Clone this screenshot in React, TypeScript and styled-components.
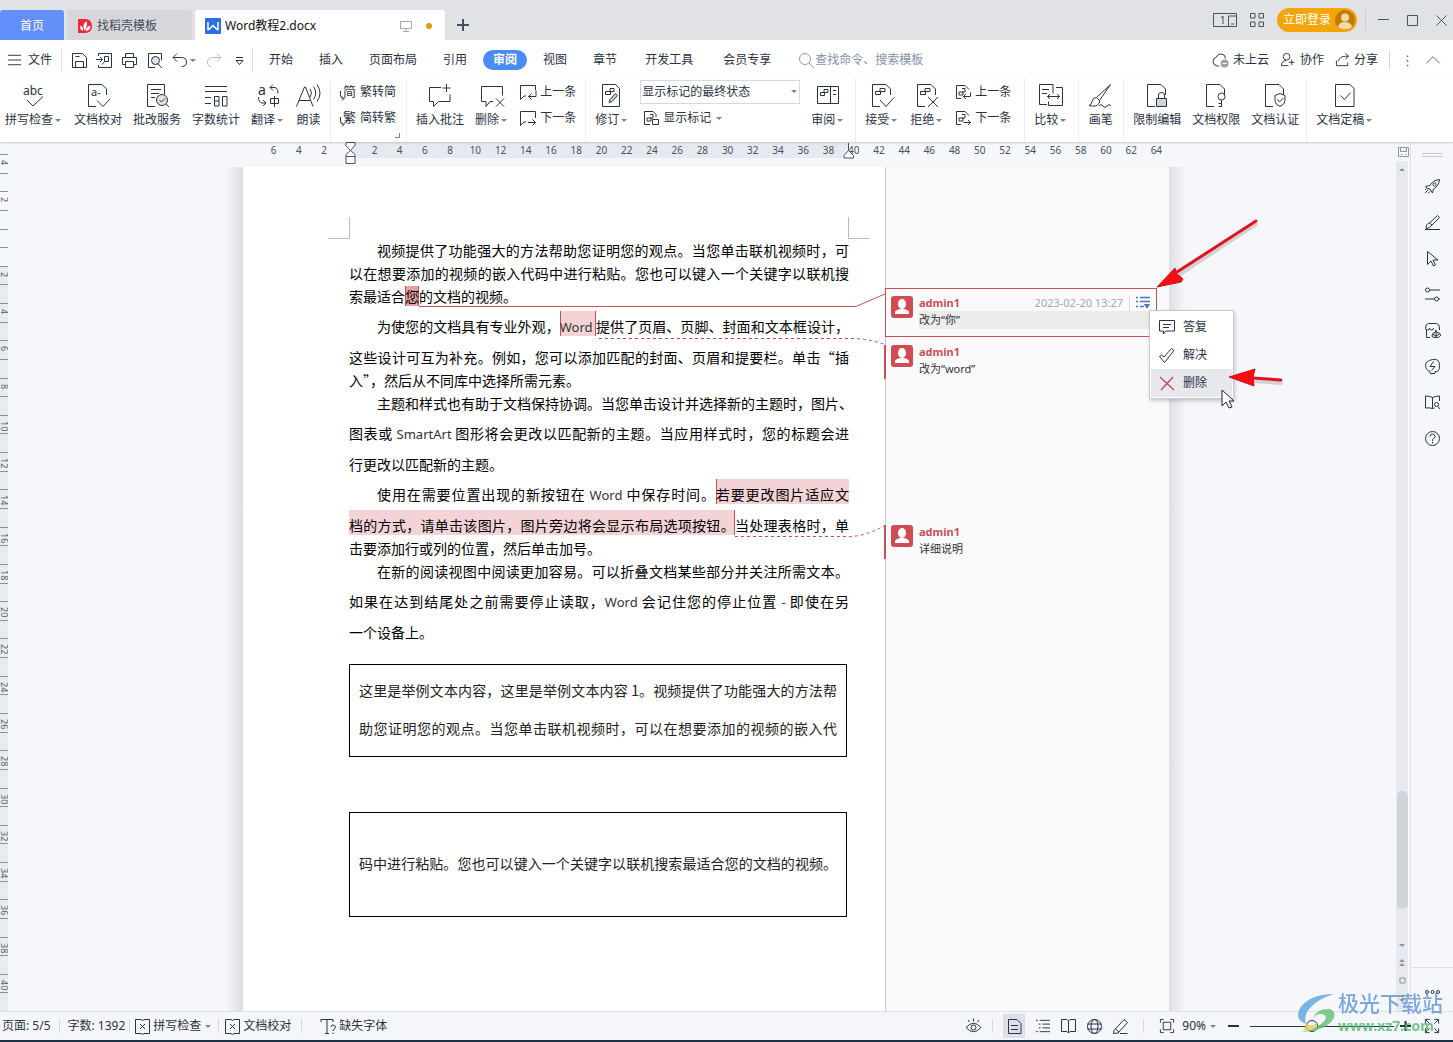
import React from "react";
import styled, { createGlobalStyle, css } from "styled-components";

const uiFont = '"Noto Sans", "Noto Sans CJK SC", sans-serif';
const docFont = '"Noto Sans CJK SC", "Noto Sans", sans-serif';
const ink = "#2b3244";
const red = "#c94f57";

const Global = createGlobalStyle`
  *, *::before, *::after { box-sizing: border-box; }
  html, body, #root { height: 100%; }
  body { margin: 0; overflow: hidden; font: 12px/18px ${uiFont}; color: ${ink}; }
  button, input, select { font: inherit; color: inherit; margin: 0; }
  button { padding: 0; border: 0; background: none; white-space: nowrap; cursor: default; }
  svg { display: block; flex: none; }
`;

/* ---------- icons ---------- */

const Svg = styled.svg`
  fill: none;
  stroke: currentColor;
  stroke-width: 1;
  overflow: visible;
  text {
    fill: currentColor;
    stroke: none;
    font-family: ${uiFont};
  }
`;

const docShape = "M10 22.5H2.5V.5H16l4.5 4.5v6";

const icons: Record<string, React.ReactNode> = {
  spell: (
    <>
      <text x="1" y="11" fontSize="12">abc</text>
      <path d="M5 16l6 6L21 12.500" />
    </>
  ),
  proof: (
    <>
      <path d={docShape} />
      <text x="5" y="12" fontSize="11">a-</text>
      <path d="M11 16.500l6 6 7-7.500" />
    </>
  ),
  grade: (
    <>
      <path d="M10 22.500H2.500V.5h17v10 M6 5.500h10 M6 9.500h8 M6 13.500h4" />
      <circle cx="17" cy="16" r="5.500" fill="#e0e2e6" />
      <path d="M14.500 16l2 2 3.500-3.500 M21 20l3 3" />
    </>
  ),
  count: (
    <path d="M1 2.500h22 M1 7.500h22 M1 13.500h6 M1 19.500h6 M10.500 12.500h4.500v9.500h-4.500z M10.500 17h4.500 M18.500 12.500h4.500v9.500h-4.500z" />
  ),
  translate: (
    <>
      <text x="2" y="11" fontSize="14">a</text>
      <path d="M14 3.500h5q3 .5 3 6 M17 .5l-3 3 3 3 M2.500 13q0 6 4 6h3 M7 16l3 3-3 3 M14.500 14.500h8v5h-8z M18.500 12v11" />
    </>
  ),
  read: (
    <path d="M.5 22.500L8.500 3h1l7.500 19.500 M3 16.500h11.500 M14 5q3 4 0 8 M17.500 2.500q4.500 6.500 0 13 M21 .5q6 8.500 0 17" />
  ),
  addNote: <path d="M13 3.500H1.500v14h4v5l5-5h11.500v-7 M18.500 0v8 M14.500 4h8" />,
  delNote: <path d="M13 17.500h-3l-4 5v-5H1.500V2.500h21v9 M16 14.500l8 8 M24 14.500l-8 8" />,
  revise: (
    <>
      <path d="M2.500.5h13l4 4v18h-17z M10 4.500h4v3h-4z M5.500 7.500h5v3h-5z" />
      <path d="M9 18.500l1-3 5.500-6 2 2-5.500 6z" fill="#ccd0d6" />
    </>
  ),
  panel: <path d="M1.500 2.500h21v17h-21z M14.500 2.500v17 M8 5.500h4v3H8z M4.500 8.500h4v3h-4z M17 6.500h3 M17 10.500h3" />,
  accept: (
    <>
      <path d={docShape} />
      <path d="M10 4.500h5v3h-5z M5.500 7.500h5v3h-5z M10 16l6 6.500 8-9" />
    </>
  ),
  reject: (
    <>
      <path d={docShape} />
      <path d="M10 4.500h5v3h-5z M5.500 7.500h5v3h-5z M13 13l10 10 M23 13l-10 10" />
    </>
  ),
  compare: (
    <path d="M8 20.500H.5V.5h13.500v9 M3 5.500h7 M3 9.500h5 M17 3.500h6.500v18H9.500v-4 M8.500 12.500h12 M11 10l-2.500 2.500L11 15 M18 10l2.500 2.500L18 15" />
  ),
  brush: (
    <path d="M22.500.5L8.500 13.500l3 3L22.500.5z M8.500 13.500q-4 0-4.500 4-.5 3-3 4 7 2 10-2 1-1.500.5-3 M11 22q2-3 4 0t4 0 4 0" />
  ),
  lock: (
    <>
      <path d={docShape} />
      <path d="M13.500 14v-3q0-2.500 3-2.500t3 2.500v3" />
      <path d="M11.500 14.500h10v8h-10z" fill="#cfd2d8" />
    </>
  ),
  key: (
    <>
      <path d={docShape} />
      <circle cx="17.500" cy="12.500" r="3.500" fill="#fff" />
      <path d="M17.500 16v7 M17.500 19.500h-3 M17.500 22.500h-3" />
    </>
  ),
  shield: (
    <>
      <path d={docShape} />
      <path d="M17 9.500l5 2v5q0 4-5 6-5-2-5-6v-5z" fill="#fff" />
      <path d="M14.500 15.500l2 2.500 4-4" />
    </>
  ),
  final: <path d="M2.500.5H17l4 4v18H2.500z M7.500 11.500l4 4 6-7" />,
};

const smallIcons: Record<string, React.ReactNode> = {
  simp: (
    <>
      <text x="3" y="12" fontSize="13">简</text>
      <path d="M.5 7v4q0 3.500 3 3.500 M2 12.500l2 2-2 2" />
    </>
  ),
  trad: (
    <>
      <text x="3" y="12" fontSize="13">繁</text>
      <path d="M.5 7v4q0 3.500 3 3.500 M2 12.500l2 2-2 2" />
    </>
  ),
  prevNote: <path d="M15.500 6V1.500H.5v14l3.500-3.500h2 M16 6.500v6H8.500 M11.500 9.500l-3 3 3 3" />,
  nextNote: <path d="M15.500 8V1.500H.5v14l3.500-3.500h2 M8 12.500h7.500 M12.500 9.500l3 3-3 3" />,
  marks: <path d="M7 14.500H1.500v-13H10l3 3V7 M4 8h4v3H4z M7 4.500h3V8H7 M9.500 9.500h6v5h-6z" />,
  prevRev: <path d="M6 14.500H1.500v-13H10l4 4 M4 8h4v3H4z M7 4.500h3V8H7 M15 12.500H8.500 M15.500 8.500v4 M11 10l-2.500 2.500L11 15" />,
  nextRev: <path d="M6 14.500H1.500v-13H10l4 4 M4 8h4v3H4z M7 4.500h3V8H7 M8.500 12.500h7 M13 10l2.500 2.500L13 15" />,
  save: <path d="M1.500 1.500h10l4 4v10h-14z M4.500 15.500V9.500h8v6 M4.500 4.500h4" />,
  exportPdf: <path d="M2.500 4V1.500h13v14h-13V13 M0 7.500h6 M4 5l2.500 2.500L4 10 M8.500 4.500h4v5h-4z M8.500 9.500l-2.500 3" />,
  print: <path d="M4.500 5V1.500h8V5 M4 12.500H1.500V5.500h14v7H13 M4.500 9.500h8v6h-8z" />,
  preview: (
    <>
      <path d="M9 15.500H2.500v-14h13v7" />
      <circle cx="9.500" cy="8.500" r="4" fill="#dfe2e7" />
      <path d="M12 12l4 4" />
    </>
  ),
  undo: <path d="M6 1.500l-4 4 4 4 M2.500 5.500h8q5 0 5 4.500t-5 4.500" />,
  redo: <path d="M11 1.500l4 4-4 4 M14.500 5.500h-8q-5 0-5 4.500t4 4.500" />,
  more: <path d="M5 5.500h7 M5 8.500h7l-3.500 4z" />,
  burger: <path d="M1 3.500h14 M1 8.500h14 M1 13.500h14" />,
  search: (
    <>
      <circle cx="7" cy="7" r="5.500" />
      <path d="M11 11l5 5" />
    </>
  ),
  cloud: (
    <>
      <path d="M7 14H5Q1 13 1 9.500T4.500 5Q5.500 1.500 9.500 2T13.500 6.500" />
      <circle cx="12.500" cy="11.500" r="4" fill="#9aa0ad" stroke="none" />
      <path d="M10.500 11.500h4" stroke="#fff" />
    </>
  ),
  collab: (
    <>
      <circle cx="7" cy="5" r="3.500" />
      <path d="M9 14.500H1.500q0-5 5-5.500 M12.500 8v6 M9.500 11h6" />
    </>
  ),
  share: <path d="M1.500 9v5.500h12V11 M3.500 10q1-5.500 8-5.500h2.500 M11 1.500l3.500 3-3.500 3" />,
  dots: <path d="M8.500 2v2 M8.500 8v2 M8.500 14v2" strokeWidth="2" />,
  chevronUp: <path d="M1.500 12l7-7 7 7" />,
  rocket: (
    <>
      <path d="M6 7.500Q9 2 15.500 1.500 15 8 9.500 11l-1 4-2.500-4-3-.5L1.500 8.500z" />
      <circle cx="10.500" cy="6.500" r="1.500" />
      <path d="M4 12l-3 3 M6 13.500L4 15.500 M2.500 10.500l-1.500 1.500" />
    </>
  ),
  pen: <path d="M13.500 1.500l2 2L8 11 5.500 9z M5.500 9q-3 0-3.500 5.500 4 0 6-3.500 M1 15.500h15" />,
  pointer: <path d="M3.500 1.500v13l3.500-3.500 2.500 5 2-1-2.500-5h5z" />,
  sliders: (
    <>
      <circle cx="3.500" cy="4" r="2" />
      <circle cx="12.500" cy="13" r="2" />
      <path d="M5.500 4H16 M1 13h9.500 M14.500 13H16" />
    </>
  ),
  shop: <path d="M6 15.500H2.500V8 M1.500 6q0-4 3-4.500h8q3 .5 3 4.500 M1.500 6q0 2 2 2t2-2q0 2 2 2t2-2 M15.500 6v2 M8 14q0-3.500 3-3.500l1-2.500 1 2.500q3.500 0 3.500 2.500t-4.500 2.500-4-1.500z M12 10v5.500 M9 12.500l3 1.500 3.500-2" />,
  bulb: <path d="M6 15.500h5 M6 15v-1.500Q1.500 12 1.500 7.500T8.500 1.500t7 6-4.500 6V15 M9.500 3.500L6 8.500h5L7.500 12.500" />,
  book: <path d="M8.500 3.500v11 M8.500 3.500q-3-1.500-7-1.500v12q4-.5 7 .5 M8.500 3.500q3-1.500 7-1.500v5 M8.500 14.500l2-.5 M10.500 10.500a2 2 0 1 0 4 0a2 2 0 1 0-4 0 M14 12.500l2 2.500" />,
  help: (
    <>
      <circle cx="8.500" cy="8.500" r="7" />
      <path d="M6 6.500q0-2.500 2.500-2.500T11 6.500q0 1.500-2.500 3V11 M8.500 12v1.500" />
    </>
  ),
  reply: <path d="M1.500 1.500h15v10.500H8l-2.500 3v-3h-4z M5 5.500h8 M5 8.500h6" />,
  resolve: <path d="M1.500 9.500l2-1.500 2.500 2L13.500 1.500l2.500 2-9.500 12z" />,
  remove: <path d="M2 2l14 13 M15 2L3 15" stroke="#c94f57" strokeWidth="1.500" />,
  spellBook: <path d="M8.500 2.500l-1.500-1H1.500v14h5.500l1.500 1 1.500-1h5.500v-14H10z M6 6l5 5 M11 6l-5 5" />,
  missing: <path d="M1 4V1.500h12V4 M7 1.500v14 M5 15.500h4 M11 9q0-2 2-2t2.500 2q0 1.500-2.500 3v1 M13 14.500V16" />,
  eye: (
    <>
      <path d="M1 9.500Q8.500 1 16 9.500 8.500 18 1 9.500z M8.500.5v3 M3 2l1.500 2 M14 2l-1.500 2" />
      <circle cx="8.500" cy="9.500" r="2.500" />
    </>
  ),
  pageView: <path d="M2.500 1.500h8.500l4 4v10H2.500z M5 7.500h7 M5 11.500h7" />,
  outline: <path d="M1 2.500h2 M5 2.500h11 M4 6.500h2 M8 6.500h8 M4 10.500h2 M8 10.500h8 M1 14.500h2 M5 14.500h11" />,
  openBook: <path d="M8.500 3L7 1.500H1.500v12H7L8.500 15l1.500-1.500h5.500v-12H10z M8.500 3v12" />,
  globe: (
    <>
      <circle cx="8.500" cy="8.500" r="7" />
      <ellipse cx="8.500" cy="8.500" rx="3.500" ry="7" />
      <path d="M1.500 6h14 M1.500 11h14" />
    </>
  ),
  marker: <path d="M2 12.500L12 1.500l3.500 3L6 15l-4.500.5z M3.500 11l3.500 3 M8 15.500h7.500" />,
  fit: <path d="M4.500 4.500h8v8h-8z M1.500 5V1.500H5 M12 1.500h3.500V5 M15.500 12v3.500H12 M5 15.500H1.500V12" />,
  full: <path d="M1.500 6V1.500H6 M1.500 1.500L6 6 M11 1.500h4.500V6 M15.500 1.500L11 6 M15.500 11v4.500H11 M15.500 15.500L11 11 M6 15.500H1.500V11 M1.500 15.500L6 11" />,
  dots3: (
    <>
      <circle cx="3" cy="8" r="1.500" />
      <circle cx="8.500" cy="8" r="1.500" />
      <circle cx="14" cy="8" r="1.500" />
    </>
  ),
};

const BigIcon = ({ name }: { name: string }) => (
  <Svg width={25} height={24} viewBox="0 0 25 24" aria-hidden>{icons[name]}</Svg>
);
const SmallIcon = ({ name, size = 17 }: { name: string; size?: number }) => (
  <Svg width={size} height={size} viewBox="0 0 17 17" aria-hidden>{smallIcons[name]}</Svg>
);

const Caret = styled.span`
  width: 8px;
  margin-left: 2px;
  display: inline-flex;
  &::after {
    content: "";
    border: 3px solid transparent;
    border-top-color: #7c8494;
    border-bottom: 0;
  }
`;

/* ---------- frame ---------- */

const Frame = styled.div`
  display: flex;
  flex-direction: column;
  height: 100vh;
  background: #f5f7fa;
  border-bottom: 2px solid #1d3246;
`;

const Divider = styled.span<{ $h?: number; $m?: number }>`
  flex: none;
  width: 1px;
  height: ${(p) => p.$h ?? 20}px;
  margin: 0 ${(p) => p.$m ?? 0}px;
  background: #d5d8de;
`;

/* ---------- title bar ---------- */

const TitleBar = styled.header`
  flex: none;
  display: flex;
  align-items: flex-end;
  height: 40px;
  padding-right: 6px;
  background: #e1e2e6;
`;

const DocTabs = styled.nav`
  display: flex;
  gap: 3px;
`;

const DocTab = styled.button<{ $kind: "home" | "idle" | "active" }>`
  display: flex;
  align-items: center;
  gap: 4px;
  height: 30px;
  padding: 2px 10px 0;
  border-radius: 3px 3px 0 0;
  ${(p) => p.$kind === "home" && css`width: 64px; justify-content: center; background: #628ffa; color: #fff;`}
  ${(p) => p.$kind === "idle" && css`width: 125px; background: #d6d7db; color: #454b59;`}
  ${(p) => p.$kind === "active" && css`width: 250px; background: #fff; color: #111;`}
`;

const TabStatus = styled.span`
  display: flex;
  align-items: center;
  gap: 14px;
  margin-left: auto;
  padding-right: 3px;
  color: #a3a8b3;
`;

const Unsaved = styled.span`
  width: 6px;
  height: 6px;
  border-radius: 50%;
  background: #e0980c;
`;

const NewTab = styled.button`
  display: grid;
  place-items: center;
  width: 36px;
  height: 30px;
  color: #454e63;
`;

const WindowTools = styled.div`
  display: flex;
  align-items: center;
  gap: 13px;
  height: 40px;
  margin-left: auto;
  color: #4a5160;
`;

const Login = styled.button`
  display: flex;
  align-items: center;
  justify-content: space-between;
  width: 80px;
  height: 24px;
  padding: 0 2px 0 6px;
  border-radius: 12px;
  background: #f5a507;
  color: #fff;
`;

const WindowButtons = styled.div`
  display: flex;
  align-items: center;
  gap: 18px;
  padding-left: 12px;
  margin-left: -5px;
  border-left: 1px solid #c9ccd3;
`;

/* ---------- menu row ---------- */

const MenuRow = styled.div`
  flex: none;
  display: flex;
  align-items: center;
  height: 38px;
  padding: 2px 12px 0 7px;
  background: #fff;
`;

const MenuButton = styled.button<{ $gap?: number; $color?: string }>`
  display: flex;
  align-items: center;
  gap: ${(p) => p.$gap ?? 4}px;
  color: ${(p) => p.$color ?? ink};
`;

const QuickBar = styled.div`
  display: flex;
  align-items: center;
  gap: 8px;
  padding: 0 4px 0 9px;
  margin-left: 9px;
  height: 24px;
  border-left: 1px solid #dcdfe4;
  border-right: 1px solid #dcdfe4;
`;

const Tabs = styled.nav`
  display: flex;
  align-items: center;
  padding-left: 3px;
`;

const RibbonTab = styled.button<{ $wide?: boolean; $on?: boolean }>`
  height: 20px;
  line-height: 20px;
  padding: 0 ${(p) => (p.$wide ? 15 : 13)}px;
  ${(p) => p.$on && css`
    margin: 0 3px;
    padding: 0 10px;
    border-radius: 10px;
    background: #4a8bf5;
    color: #fff;
    font-weight: 700;
  `}
`;

const Search = styled.label`
  display: flex;
  align-items: center;
  flex: 1;
  margin-left: 12px;
  color: #8a97ac;
`;

const SearchInput = styled.input`
  flex: 1;
  min-width: 0;
  border: 0;
  padding: 0;
  outline: 0;
  background: none;
  &::placeholder { color: #8490a5; opacity: 1; }
`;

const MenuTools = styled.div`
  display: flex;
  align-items: center;
  gap: 11px;
`;

/* ---------- ribbon ---------- */

const Ribbon = styled.div`
  flex: none;
  display: flex;
  height: 64px;
  background: #fff;
  box-shadow: 0 1px 2px rgba(60, 70, 90, 0.25);
  position: relative;
  z-index: 2;
`;

const Group = styled.div<{ $start?: number; $end?: number; $last?: boolean }>`
  position: relative;
  display: flex;
  gap: 11px;
  padding: 2px ${(p) => p.$end ?? 10}px 0 ${(p) => p.$start ?? 9}px;
  border-right: ${(p) => (p.$last ? 0 : 1)}px solid #eceef1;
`;

const Corner = styled.span`
  position: absolute;
  right: 6px;
  bottom: 4px;
  width: 5px;
  height: 5px;
  border: solid #7c8494;
  border-width: 0 1px 1px 0;
`;

const Tool = styled.button`
  display: flex;
  flex-direction: column;
  align-items: center;
  gap: 3px;
  height: 54px;
  padding-top: 4px;
`;

const Label = styled.span`
  display: flex;
  align-items: center;
`;

const Stack = styled.div`
  display: flex;
  flex-direction: column;
  gap: 2px;
`;

const RowTool = styled.button<{ $indent?: number }>`
  display: flex;
  align-items: center;
  gap: 3px;
  height: 24px;
  padding-left: ${(p) => p.$indent ?? 0}px;
`;

const SelectWrap = styled.label`
  position: relative;
  display: flex;
  width: 160px;
  height: 24px;
  ${Caret} {
    position: absolute;
    right: 1px;
    top: 10px;
  }
`;

const Select = styled.select`
  appearance: none;
  width: 100%;
  padding: 0 1px;
  border: 1px solid #d5d8de;
  border-radius: 0;
  background: #fff;
`;

/* ---------- workspace ---------- */

const Workspace = styled.div`
  flex: 1;
  min-height: 0;
  display: flex;
`;

const VRuler = styled.div`
  flex: none;
  display: flex;
  flex-direction: column;
  width: 8px;
  padding-top: 12px;
  overflow: hidden;
`;

const VCell = styled.span<{ $margin: boolean }>`
  flex: 1;
  min-height: 0;
  border-top: 1px solid #8b919c;
  background: linear-gradient(#8b919c, #8b919c) 0 50% / 100% 1px no-repeat ${(p) => (p.$margin ? "#f5f7fa" : "#e8ebf0")};
  font-size: 9px;
  line-height: 8px;
  color: #5a6070;
  writing-mode: vertical-rl;
  padding-top: 5px;
`;

const Editor = styled.main`
  flex: 1;
  min-width: 0;
  display: flex;
  flex-direction: column;
`;

const RulerBar = styled.div`
  flex: none;
  display: flex;
  justify-content: center;
  height: 25px;
  padding-left: 8px;
`;

const HRuler = styled.div`
  position: relative;
  display: grid;
  grid-template-columns: repeat(36, 1fr);
  width: 926px;
  padding-left: 18px;
  background: linear-gradient(#e6eaf0, #e6eaf0) 107px 0 / 499px 16px no-repeat;
  font-size: 10px;
  line-height: 16px;
  text-align: center;
  color: #4a5160;
`;

const RulerMark = styled(Svg)<{ $x: number; $y: number }>`
  position: absolute;
  left: ${(p) => p.$x}px;
  top: ${(p) => p.$y}px;
`;

const Canvas = styled.div`
  flex: 1;
  min-height: 0;
  display: flex;
  justify-content: center;
  padding-left: 8px;
  overflow: hidden;
`;

const PageEdge = styled.span<{ $side: "left" | "right" }>`
  flex: none;
  width: 17px;
  background: linear-gradient(to ${(p) => p.$side}, #dcdee1, #f5f7fa);
`;

const Page = styled.div`
  position: relative;
  flex: none;
  display: flex;
  width: 926px;
  background: #fff;
`;

const Sheet = styled.article`
  flex: 1;
  min-width: 0;
  padding: 50px 36px 0 106px;
  font-family: ${docFont};
  font-size: 14px;
  color: #000;
`;

const MarginMarks = styled.div`
  display: flex;
  justify-content: space-between;
  height: 22px;
  margin: 0 -21px;
  &::before, &::after {
    content: "";
    width: 22px;
    border: solid #b9bcc2;
    border-width: 0 1px 1px 0;
  }
  &::after { border-width: 0 0 1px 1px; }
`;

const Paragraph = styled.p`
  margin: 0;
`;

const Line = styled.span<{ $tall?: boolean; $first?: boolean; $full?: boolean }>`
  display: block;
  line-height: 23px;
  padding-top: ${(p) => (p.$tall ? 7 : 0)}px;
  padding-left: ${(p) => (p.$first ? "2em" : 0)};
  text-align: left;
  text-align-last: ${(p) => (p.$full ? "justify" : "left")};
  white-space: nowrap;
`;

const Latin = styled.span`
  font-family: ${uiFont};
  font-size: 13px;
  color: #333;
`;

const Mark = styled.mark<{ $on?: boolean; $open?: boolean; $close?: boolean }>`
  color: inherit;
  padding-top: ${(p) => (p.$on ? 0 : 5)}px;
  background: ${(p) => (p.$on ? "#e3a0a4" : "#f3d3d5")};
  box-shadow: ${(p) => `${p.$open ? `inset 1px 0 ${red}` : "inset 0 0 transparent"}, ${p.$close ? `inset -1px 0 ${red}` : "inset 0 0 transparent"}`};
`;

const TextFrame = styled.section<{ $gap: number; $top: number; $bottom: number }>`
  margin: ${(p) => p.$gap}px 2px 0 0;
  padding: ${(p) => p.$top}px 9px ${(p) => p.$bottom}px;
  border: 1px solid #000;
  color: #222;
`;

const BoxLine = styled.span`
  display: block;
  line-height: 38px;
  text-align-last: justify;
  white-space: nowrap;
`;

const Comments = styled.aside`
  flex: none;
  width: 284px;
  padding-top: 121px;
  border-left: 1px solid #c9cbd0;
  background: #fafafb;
`;

const Comment = styled.section<{ $on?: boolean; $gap?: number }>`
  position: relative;
  display: flex;
  gap: 6px;
  width: 272px;
  height: 49px;
  margin: ${(p) => p.$gap ?? 0}px 0 0 -1px;
  padding: 7px 6px 0 5px;
  border: 1px solid ${(p) => (p.$on ? red : "transparent")};
  ${(p) => !p.$on && css`
    &::before {
      content: "";
      position: absolute;
      left: -2px;
      top: 7px;
      width: 2px;
      height: 34px;
      background: ${red};
    }
  `}
`;

const Avatar = styled.span`
  flex: none;
  width: 22px;
  height: 22px;
  border-radius: 3px;
  background: #d04c54;
`;

const CommentBody = styled.div`
  flex: 1;
  min-width: 0;
`;

const CommentHead = styled.div`
  display: flex;
  align-items: center;
  height: 13px;
  margin-bottom: 2px;
  color: #a5a8ae;
  font-size: 11px;
`;

const Author = styled.strong`
  margin-right: auto;
  color: ${red};
  font-size: 11px;
`;

const CommentText = styled.input<{ $on?: boolean }>`
  display: block;
  width: 100%;
  height: 18px;
  padding: 0;
  border: 0;
  outline: 0;
  background: ${(p) => (p.$on ? "#ececec" : "none")};
  font-size: 11px;
  color: #333;
`;

const Menu = styled.div`
  position: absolute;
  z-index: 3;
  left: 263px;
  top: 21px;
  width: 85px;
  padding: 2px 1px 1px;
  border: 1px solid #c6c9cf;
  background: #fff;
  box-shadow: 1px 2px 4px rgba(0, 0, 0, 0.2);
`;

const MenuItem = styled.button<{ $on?: boolean }>`
  display: flex;
  align-items: center;
  gap: 8px;
  width: 100%;
  height: 28px;
  padding-left: 7px;
  background: ${(p) => (p.$on ? "#e6e8ee" : "none")};
`;

const Overlay = styled.svg<{ $top?: boolean }>`
  position: absolute;
  left: 0;
  top: 0;
  z-index: ${(p) => (p.$top ? 4 : 1)};
  pointer-events: none;
`;

/* ---------- scroll rail and side bar ---------- */

const Rail = styled.div`
  flex: none;
  display: flex;
  flex-direction: column;
  align-items: center;
  width: 15px;
  border-right: 1px solid #dfe1e6;
  color: #8d93a6;
`;

const RailTrack = styled.div`
  flex: 1;
  align-self: stretch;
  display: flex;
  flex-direction: column;
  align-items: center;
  gap: 10px;
  margin: 3px 2px 0 0;
  padding: 6px 0 8px;
  background: #e8e9ee;
`;

const RailFill = styled.div`
  flex: 1;
  display: flex;
  flex-direction: column;
  justify-content: flex-end;
  padding-bottom: 24px;
`;

const Thumb = styled.span`
  width: 11px;
  height: 118px;
  border-radius: 5px;
  background: #d2d4dc;
`;

const SideBar = styled.aside`
  flex: none;
  display: flex;
  flex-direction: column;
  align-items: center;
  width: 42px;
  padding: 11px 0 8px;
`;

const Grip = styled.span`
  width: 21px;
  height: 4px;
  border: solid #c5c8cf;
  border-width: 1px 0;
  margin-bottom: 21px;
`;

const SideButton = styled.button`
  height: 36px;
  padding-bottom: 19px;
`;

const SideFoot = styled.div`
  display: flex;
  justify-content: center;
  align-self: stretch;
  margin-top: auto;
  padding: 16px 0 2px;
  border-top: 1px solid #dfe1e6;
`;

/* ---------- status bar ---------- */

const StatusBar = styled.footer`
  flex: none;
  display: flex;
  align-items: center;
  height: 29px;
  padding: 0 13px 0 2px;
  border-top: 1px solid #dfe1e6;
  background: #f5f6fa;
`;

const StatusButton = styled.button<{ $indent?: number }>`
  display: flex;
  align-items: center;
  gap: 2px;
  padding-left: ${(p) => p.$indent ?? 0}px;
`;

const StatusRight = styled.div`
  display: flex;
  align-items: center;
  margin-left: auto;
`;

const Views = styled.div<{ $gap?: number }>`
  display: flex;
  align-items: center;
  gap: ${(p) => p.$gap ?? 9}px;
`;

const ViewButton = styled.button<{ $on?: boolean }>`
  display: grid;
  place-items: center;
  width: ${(p) => (p.$on ? 22 : 17)}px;
  height: 24px;
  background: ${(p) => (p.$on ? "#dfdfeb" : "none")};
`;

const Zoom = styled.input`
  appearance: none;
  flex: none;
  width: 144px;
  height: 14px;
  && { margin: 0 3px 0 8px; }
  background: linear-gradient(${ink}, ${ink}) 0 50% / 100% 1px no-repeat;
  &::-webkit-slider-thumb {
    appearance: none;
    width: 12px;
    height: 12px;
    border: 1px solid ${ink};
    border-radius: 50%;
    background: #f5f6fa;
  }
`;

const Watermark = styled.div`
  position: fixed;
  right: 10px;
  bottom: 6px;
  z-index: 5;
  display: flex;
  align-items: center;
  opacity: 0.8;
  pointer-events: none;
`;

const WatermarkText = styled.div`
  display: flex;
  flex-direction: column;
  font-size: 21px;
  line-height: 26px;
  font-weight: 500;
  color: #5c94d6;
  small {
    font-size: 14px;
    line-height: 20px;
    font-weight: 700;
    color: #53b870;
  }
`;

/* ---------- pieces ---------- */

const BigTool = ({ icon, label, menu }: { icon: string; label: string; menu?: boolean }) => (
  <Tool>
    <BigIcon name={icon} />
    <Label>{label}{menu && <Caret />}</Label>
  </Tool>
);

const PersonIcon = () => (
  <svg width="22" height="22" viewBox="0 0 22 22" aria-hidden>
    <ellipse cx="11" cy="8" rx="4" ry="5" fill="#fff" />
    <path d="M4 18v-2q0-2 7-3.500 7 1.500 7 3.500v2z" fill="#fff" />
  </svg>
);

const Note = ({ text, gap, on }: { text: string; gap?: number; on?: boolean }) => (
  <Comment $on={on} $gap={gap}>
    <Avatar><PersonIcon /></Avatar>
    <CommentBody>
      <CommentHead>
        <Author>admin1</Author>
        {on && (
          <>
            <time>2023-02-20 13:27</time>
            <Divider $h={16} $m={6} />
            <button aria-label="批注菜单">
              <Svg width="14" height="13" viewBox="0 0 14 13" color="#4b7ac8">
                <path d="M0 1.500h2 M4 1.500h10 M0 5.500h2 M4 5.500h10 M0 10.500h2 M4 10.500h4" strokeWidth="1.500" />
                <path d="M8.500 8.500h5l-2.500 3.500z" fill="currentColor" />
              </Svg>
            </button>
          </>
        )}
      </CommentHead>
      <CommentText $on={on} defaultValue={text} aria-label="批注内容" />
    </CommentBody>
    {on && (
      <Menu role="menu">
        <MenuItem role="menuitem"><SmallIcon name="reply" />答复</MenuItem>
        <MenuItem role="menuitem"><SmallIcon name="resolve" />解决</MenuItem>
        <MenuItem role="menuitem" $on><SmallIcon name="remove" />删除</MenuItem>
      </Menu>
    )}
  </Comment>
);

const hMarks = Array.from({ length: 36 }, (_, i) => Math.abs(i * 2 - 6) || "");
const vMarks = Array.from({ length: 23 }, (_, i) => Math.abs(i * 2 - 4) || "");
const sideItems = [
  ["rocket", "快捷"], ["pen", "样式"], ["pointer", "选择"], ["sliders", "属性"],
  ["shop", "素材"], ["bulb", "推荐"], ["book", "查找"], ["help", "帮助"],
];

export default function App() {
  return (
    <Frame>
      <Global />
      <TitleBar>
        <DocTabs>
          <DocTab $kind="home">首页</DocTab>
          <DocTab $kind="idle">
            <svg width="16" height="16" viewBox="0 0 16 16" aria-hidden>
              <path d="M1 1h8q6 1 6 7t-6 7H1z" fill="#f5253c" />
              <path d="M6 13Q2 11 3.500 7.500 6.500 9 6 13z M7 12Q5 6 9.500 3q1.500 4-1.500 9z M8.500 13q1-5 5-5-.5 5-5 5z" fill="#fff" />
            </svg>
            找稻壳模板
          </DocTab>
          <DocTab $kind="active">
            <svg width="16" height="16" viewBox="0 0 16 16" aria-hidden>
              <rect width="16" height="16" rx="1" fill="#2d6ee8" />
              <path d="M3 4v7.500h1L8 7.500l4 4h1V4" fill="none" stroke="#fff" strokeWidth="1.500" />
            </svg>
            Word教程2.docx
            <TabStatus>
              <Svg width="12" height="12" viewBox="0 0 12 12"><path d="M.5 1.500h11v7H.5z M6 8.500v3 M3 11.500h6" /></Svg>
              <Unsaved />
            </TabStatus>
          </DocTab>
        </DocTabs>
        <NewTab aria-label="新建">
          <Svg width="12" height="12" viewBox="0 0 12 12"><path d="M6 0v12 M0 6h12" strokeWidth="2" /></Svg>
        </NewTab>
        <WindowTools>
          <Svg width="24" height="14" viewBox="0 0 24 14">
            <path d="M.5.5h23v13H.5z M15.500 13.500V3h8 M18 11h3 M8 5l2-2v8" />
          </Svg>
          <Svg width="14" height="14" viewBox="0 0 14 14">
            <path d="M.5.5h4.500v4.500H.5z M9 .5h4.500v4.500H9z M.5 9h4.500v4.500H.5z M9 9h4.500v4.500H9z" />
          </Svg>
          <Login>
            立即登录
            <svg width="20" height="20" viewBox="0 0 20 20" aria-hidden>
              <circle cx="10" cy="10" r="10" fill="#c07a0a" />
              <circle cx="10" cy="7.500" r="4" fill="#f3d9a6" />
              <path d="M3 17q1-5 7-5t7 5q-7 5-14 0z" fill="#f3d9a6" />
            </svg>
          </Login>
          <WindowButtons>
            <button aria-label="最小化"><Svg width="11" height="20" viewBox="0 0 11 20"><path d="M0 9.500h11" /></Svg></button>
            <button aria-label="最大化"><Svg width="11" height="11" viewBox="0 0 11 11"><path d="M.5.5h10v10H.5z" /></Svg></button>
            <button aria-label="关闭"><Svg width="11" height="11" viewBox="0 0 11 11"><path d="M.5.5l10 10 M10.500.5l-10 10" /></Svg></button>
          </WindowButtons>
        </WindowTools>
      </TitleBar>

      <MenuRow>
        <MenuButton $gap={5}><SmallIcon name="burger" size={16} />文件</MenuButton>
        <QuickBar>
          {["save", "exportPdf", "print", "preview"].map((n) => (
            <MenuButton key={n} aria-label={n}><SmallIcon name={n} /></MenuButton>
          ))}
          <MenuButton $gap={0} aria-label="undo"><SmallIcon name="undo" /><Caret /></MenuButton>
          <MenuButton $color="#b9bdc6" aria-label="redo"><SmallIcon name="redo" /></MenuButton>
          <MenuButton aria-label="more"><SmallIcon name="more" /></MenuButton>
        </QuickBar>
        <Tabs>
          {["开始", "插入", "页面布局", "引用", "审阅", "视图", "章节", "开发工具", "会员专享"].map((t) => (
            <RibbonTab key={t} $on={t === "审阅"} $wide={t === "开发工具" || t === "会员专享"}>{t}</RibbonTab>
          ))}
        </Tabs>
        <Search>
          <SmallIcon name="search" />
          <SearchInput placeholder="查找命令、搜索模板" aria-label="查找命令、搜索模板" />
        </Search>
        <MenuTools>
          <MenuButton><SmallIcon name="cloud" />未上云</MenuButton>
          <MenuButton><SmallIcon name="collab" size={16} />协作</MenuButton>
          <MenuButton $gap={3}><SmallIcon name="share" size={16} />分享</MenuButton>
          <Divider $h={20} />
          <MenuButton $color="#6a7080" aria-label="更多"><SmallIcon name="dots" size={13} /></MenuButton>
          <MenuButton $color="#5a6070" aria-label="折叠功能区"><SmallIcon name="chevronUp" size={16} /></MenuButton>
        </MenuTools>
      </MenuRow>

      <Ribbon>
        <Group $start={5} $end={9}>
          <BigTool icon="spell" label="拼写检查" menu />
          <BigTool icon="proof" label="文档校对" />
          <BigTool icon="grade" label="批改服务" />
          <BigTool icon="count" label="字数统计" />
          <BigTool icon="translate" label="翻译" menu />
          <BigTool icon="read" label="朗读" />
        </Group>
        <Group>
          <Stack>
            <RowTool><SmallIcon name="simp" />繁转简</RowTool>
            <RowTool><SmallIcon name="trad" />简转繁</RowTool>
          </Stack>
          <Corner />
        </Group>
        <Group $end={9}>
          <BigTool icon="addNote" label="插入批注" />
          <BigTool icon="delNote" label="删除" menu />
          <Stack>
            <RowTool><SmallIcon name="prevNote" />上一条</RowTool>
            <RowTool><SmallIcon name="nextNote" />下一条</RowTool>
          </Stack>
        </Group>
        <Group>
          <BigTool icon="revise" label="修订" menu />
          <Stack>
            <SelectWrap>
              <Select aria-label="标记显示方式"><option>显示标记的最终状态</option></Select>
              <Caret />
            </SelectWrap>
            <RowTool $indent={3}><SmallIcon name="marks" />显示标记<Caret /></RowTool>
          </Stack>
          <BigTool icon="panel" label="审阅" menu />
        </Group>
        <Group $end={13}>
          <BigTool icon="accept" label="接受" menu />
          <BigTool icon="reject" label="拒绝" menu />
          <Stack>
            <RowTool><SmallIcon name="prevRev" />上一条</RowTool>
            <RowTool><SmallIcon name="nextRev" />下一条</RowTool>
          </Stack>
        </Group>
        <Group><BigTool icon="compare" label="比较" menu /></Group>
        <Group><BigTool icon="brush" label="画笔" /></Group>
        <Group $end={7}>
          <BigTool icon="lock" label="限制编辑" />
          <BigTool icon="key" label="文档权限" />
          <BigTool icon="shield" label="文档认证" />
        </Group>
        <Group $last><BigTool icon="final" label="文档定稿" menu /></Group>
      </Ribbon>

      <Workspace>
        <VRuler aria-hidden>
          {vMarks.map((m, i) => <VCell key={i} $margin={i < 3}>{m}</VCell>)}
        </VRuler>
        <Editor>
          <RulerBar>
            <HRuler>
              {hMarks.map((m, i) => <span key={i}>{m}</span>)}
              <RulerMark $x={102} $y={0} width="11" height="23" viewBox="0 0 11 23">
                <path d="M1 .5h9v3l-4.500 5-4.500-5z M5.500 8.500l4.500 4v9H1v-9z M1 14.500h9" fill="#fff" />
              </RulerMark>
              <RulerMark $x={600} $y={8} width="12" height="9" viewBox="0 0 12 9">
                <path d="M5.500-7V.5l5 5v2.500H1V5.500l4.500-5" fill="#fff" />
              </RulerMark>
            </HRuler>
          </RulerBar>
          <Canvas>
            <PageEdge $side="left" />
            <Page>
              <Sheet>
                <MarginMarks />
                <Paragraph>
                  <Line $first $full>视频提供了功能强大的方法帮助您证明您的观点。当您单击联机视频时，可</Line>
                  <Line $full>以在想要添加的视频的嵌入代码中进行粘贴。您也可以键入一个关键字以联机搜</Line>
                  <Line>索最适合<Mark $on $open $close>您</Mark>的文档的视频。</Line>
                </Paragraph>
                <Paragraph>
                  <Line $tall $first $full>为使您的文档具有专业外观，<Mark $open $close><Latin>Word </Latin></Mark>提供了页眉、页脚、封面和文本框设计，</Line>
                  <Line $tall $full>这些设计可互为补充。例如，您可以添加匹配的封面、页眉和提要栏。单击“插</Line>
                  <Line>入”，然后从不同库中选择所需元素。</Line>
                </Paragraph>
                <Paragraph>
                  <Line $first $full>主题和样式也有助于文档保持协调。当您单击设计并选择新的主题时，图片、</Line>
                  <Line $tall $full>图表或 <Latin>SmartArt</Latin> 图形将会更改以匹配新的主题。当应用样式时，您的标题会进</Line>
                  <Line $tall>行更改以匹配新的主题。</Line>
                </Paragraph>
                <Paragraph>
                  <Line $tall $first $full>使用在需要位置出现的新按钮在 <Latin>Word</Latin> 中保存时间。<Mark $open>若要更改图片适应文</Mark></Line>
                  <Line $tall $full><Mark $close>档的方式，请单击该图片，图片旁边将会显示布局选项按钮。</Mark>当处理表格时，单</Line>
                  <Line>击要添加行或列的位置，然后单击加号。</Line>
                </Paragraph>
                <Paragraph>
                  <Line $first $full>在新的阅读视图中阅读更加容易。可以折叠文档某些部分并关注所需文本。</Line>
                  <Line $tall $full>如果在达到结尾处之前需要停止读取，<Latin>Word</Latin> 会记住您的停止位置 <Latin>-</Latin> 即使在另</Line>
                  <Line $tall>一个设备上。</Line>
                </Paragraph>
                <TextFrame $gap={20} $top={6} $bottom={9}>
                  <BoxLine>这里是举例文本内容，这里是举例文本内容 1。视频提供了功能强大的方法帮</BoxLine>
                  <BoxLine>助您证明您的观点。当您单击联机视频时，可以在想要添加的视频的嵌入代</BoxLine>
                </TextFrame>
                <TextFrame $gap={55} $top={31} $bottom={34}>
                  <BoxLine>码中进行粘贴。您也可以键入一个关键字以联机搜索最适合您的文档的视频。</BoxLine>
                </TextFrame>
              </Sheet>
              <Comments>
                <Note text="改为“你”" on />
                <Note text="改为“word”" />
                <Note text="详细说明" gap={131} />
              </Comments>
              <Overlay width="1060" height="420" viewBox="0 0 1060 420" fill="none" stroke={red} aria-hidden>
                <path d="M176 139.500H613l30-13" />
                <path d="M356 171.500H612q16 1 30 6 M492 369.500H606q16 0 36-11" strokeDasharray="3 3" />
              </Overlay>
              <Overlay $top width="1060" height="420" viewBox="0 0 1060 420" aria-hidden>
                <g fill="none" stroke="#000" strokeOpacity=".15" strokeWidth="4" strokeLinecap="round">
                  <path d="M1013 57L937 107 M1038 216l-28-2" />
                </g>
                <path d="M1013 54L934 105 M1038 213l-28-2" stroke="#e0141c" strokeWidth="3" strokeLinecap="round" />
                <path d="M914 120l18-19 1 5 7 6-2 3z M986 210l26-8-2 8 1 9z" fill="#f50f0f" stroke="#d01018" />
                <path d="M979 223v16l4-4 3 6 3-1-3-6h5z" fill="#fff" stroke="#222" />
              </Overlay>
            </Page>
            <PageEdge $side="right" />
          </Canvas>
        </Editor>
        <Rail>
          <Svg width="11" height="16" viewBox="0 0 11 16"><path d="M.5 5.500h10v9H.5z M2.500 5.500v4h6v-4 M3 12.500h1 M7 12.500h1" /></Svg>
          <RailTrack>
            <Svg width="8" height="5" viewBox="0 0 8 5"><path d="M1 4l3-3 3 3z" fill="currentColor" stroke="none" /></Svg>
            <RailFill><Thumb /></RailFill>
            <Svg width="8" height="5" viewBox="0 0 8 5"><path d="M1 1l3 3 3-3z" fill="currentColor" stroke="none" /></Svg>
            <Svg width="8" height="9" viewBox="0 0 8 9"><path d="M1 4l3-3 3 3z M1 8l3-3 3 3z" fill="currentColor" stroke="none" /></Svg>
            <Svg width="7" height="7" viewBox="0 0 7 7"><path d="M1 1h5v5H1z" /></Svg>
            <Svg width="8" height="9" viewBox="0 0 8 9"><path d="M1 1l3 3 3-3z M1 5l3 3 3-3z" fill="currentColor" stroke="none" /></Svg>
          </RailTrack>
        </Rail>
        <SideBar>
          <Grip />
          {sideItems.map(([icon, label]) => (
            <SideButton key={icon} aria-label={label}><SmallIcon name={icon} /></SideButton>
          ))}
          <SideFoot><SmallIcon name="dots3" /></SideFoot>
        </SideBar>
      </Workspace>

      <StatusBar>
        <span>页面: 5/5</span>
        <Divider $h={14} $m={8} />
        <span>字数: 1392</span>
        <Divider $h={14} $m={4} />
        <StatusButton><SmallIcon name="spellBook" />拼写检查<Caret /></StatusButton>
        <Divider $h={14} $m={5} />
        <StatusButton><SmallIcon name="spellBook" />文档校对</StatusButton>
        <Divider $h={14} $m={10} />
        <StatusButton $indent={8}><SmallIcon name="missing" />缺失字体</StatusButton>
        <StatusRight>
          <ViewButton aria-label="护眼模式"><SmallIcon name="eye" /></ViewButton>
          <Divider $h={14} $m={10} />
          <Views>
            <ViewButton $on aria-label="页面视图"><SmallIcon name="pageView" /></ViewButton>
            <ViewButton aria-label="大纲"><SmallIcon name="outline" size={16} /></ViewButton>
            <ViewButton aria-label="阅读版式"><SmallIcon name="openBook" /></ViewButton>
            <ViewButton aria-label="Web版式"><SmallIcon name="globe" /></ViewButton>
            <ViewButton aria-label="写作模式"><SmallIcon name="marker" /></ViewButton>
          </Views>
          <Divider $h={14} $m={14} />
          <Views $gap={7}>
            <ViewButton aria-label="最佳显示比例"><SmallIcon name="fit" size={16} /></ViewButton>
            <StatusButton>90%<Caret /></StatusButton>
            <ViewButton aria-label="缩小"><Svg width="11" height="12" viewBox="0 0 11 12"><path d="M0 6h11" strokeWidth="2" /></Svg></ViewButton>
          </Views>
          <Zoom type="range" min={10} max={200} defaultValue={90} aria-label="显示比例" />
          <Views>
            <ViewButton aria-label="放大"><Svg width="11" height="12" viewBox="0 0 11 12"><path d="M0 6h11 M5.500 1v10" strokeWidth="2" /></Svg></ViewButton>
            <ViewButton aria-label="全屏"><SmallIcon name="full" size={16} /></ViewButton>
          </Views>
        </StatusRight>
      </StatusBar>

      <Watermark>
        <svg width="42" height="42" viewBox="0 0 42 42" aria-hidden>
          <path d="M38 2Q14 2 4 16q-6 12 6 16-3-10 6-18Q24 6 38 2z" fill="#5aa5e0" />
          <path d="M34 17q8 4 2 12-8 10-31 11 18-4 24-12 3-5-4-6-5 0-8 4 4-10 17-9z" fill="#63c06e" />
          <path d="M10 32q4 3 12-1-3 7-15 8z" fill="#e6cf4a" />
        </svg>
        <WatermarkText>极光下载站<small>www.xz7.com</small></WatermarkText>
      </Watermark>
    </Frame>
  );
}
